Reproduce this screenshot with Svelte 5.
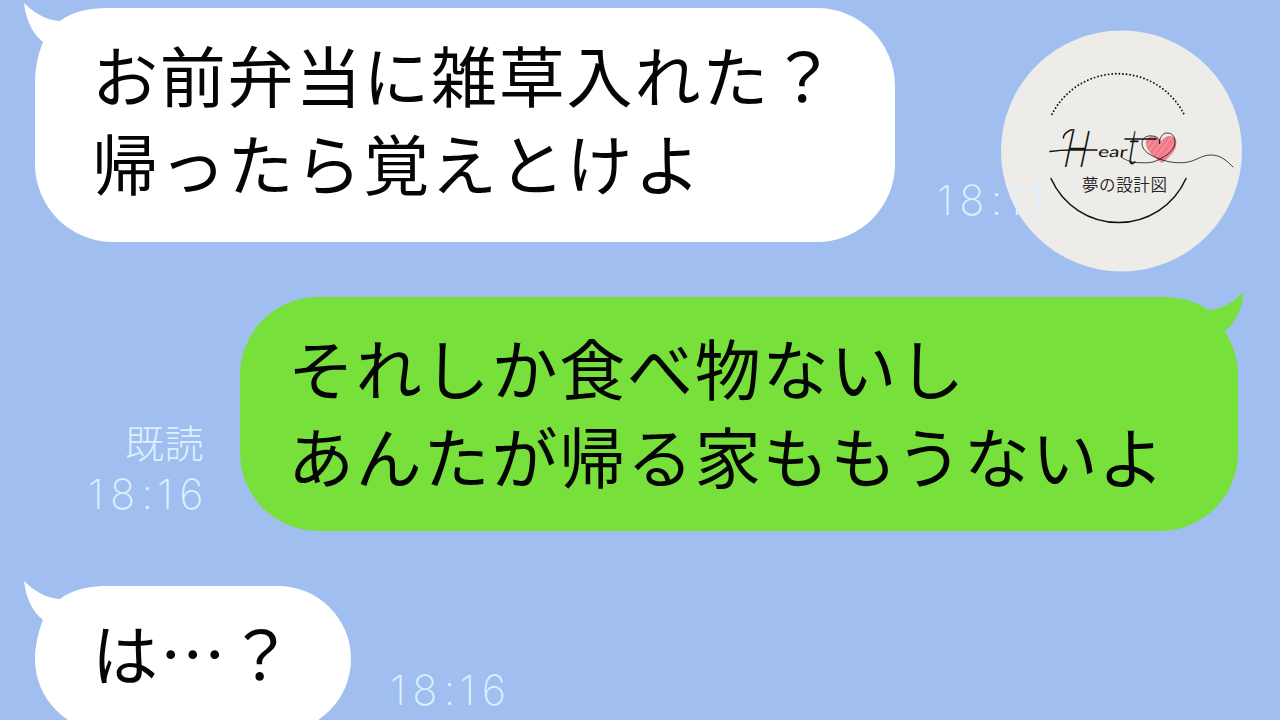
<script>
	const messages = [
		{
			id: 1,
			mine: false,
			lines: ['お前弁当に雑草入れた？', '帰ったら覚えとけよ'],
			hour: '18',
			minute: '11'
		},
		{
			id: 2,
			mine: true,
			read: true,
			lines: ['それしか食べ物ないし', 'あんたが帰る家ももうないよ'],
			hour: '18',
			minute: '16'
		},
		{
			id: 3,
			mine: false,
			lines: ['は…？'],
			hour: '18',
			minute: '16'
		}
	];
</script>

<main class="chat">
	<div class="badge">
		<svg viewBox="0 0 242 242">
			<defs>
				<clipPath id="heart">
					<path d="M162 133C152 126 145 119 146 112C147 105 156 105 161 111C166 104 174 105 176 110C178 119 171 127 162 133Z" />
				</clipPath>
			</defs>
			<circle class="disc" cx="121.500" cy="121" r="120.500" />
			<path class="dots" d="M52 84.300A74 74 0 0 1 184 84.300" />
			<path class="arc" d="M51 148.500A73.800 73.800 0 0 0 186 148.500" />
			<g clip-path="url(#heart)">
				<rect class="fill" x="140" y="100" width="40" height="35" />
				<path class="hatch" d="M146 118L156 103M148 123L162 103M152 126L168 104M155 129L174 104M159 132L178 108M164 132L179 114" />
			</g>
			<text class="script" font-size="51" transform="translate(61.500 136.500) skewX(-12) scale(0.620 1)">H</text>
			<text class="script ear" font-size="15" transform="translate(97.500 127) skewX(-8) scale(1.400 1)">ear</text>
			<text class="script" font-size="49" transform="translate(125.500 134) skewX(-9) scale(0.600 1)">t</text>
			<path class="bar" d="M50 121.500Q60 120 72 120H97M125 109H156" />
			<path class="hook" d="M63.500 108C63 104 70 99 74 100" />
			<path class="thread" d="M121 127C127 131 133 132.700 140 132.700C147 133 152 133 157 130.500C168 125 175 120 175 112C175 106 172 103 167 103C162 103 159 109 159.500 114C161 110 157 106 152 106C146 105 142 109 142 113C142 120 148 124 155 127C166 132 174 133 183 132.700C196 132 200 125 211 125C221 125 227 131 233 137" />
			<text class="name" x="82" y="160.500">夢の設計図</text>
		</svg>
	</div>

	{#each messages as message (message.id)}
		<div class="row" class:mine={message.mine}>
			<div class="bubble">
				<svg class="tail" viewBox="0 0 86 84">
					<path d="M0 1C8 9 22 19 36 19C48 10 62 6 86 6V84H11C11 66 14 52 19 40C10 33 2 20 0 1Z" />
				</svg>
				{#each message.lines as line}
					<p>{line}</p>
				{/each}
			</div>
			<div class="meta">
				{#if message.read}
					<span class="read">既読</span>
				{/if}
				<span class="time">{message.hour}<span class="colon">:</span>{message.minute}</span>
			</div>
		</div>
	{/each}
</main>

<style>
	:global(body) {
		margin: 0;
		background: #a0bff0;
	}

	.chat {
		position: relative;
		display: flex;
		flex-direction: column;
		gap: 55px;
		box-sizing: border-box;
		width: 1280px;
		height: 720px;
		padding: 8px 42px 0 35px;
		overflow: hidden;
		background: #a0bff0;
		font-family: 'Noto Sans CJK JP', sans-serif;
	}

	.row {
		position: relative;
		display: flex;
		flex: none;
		align-items: flex-end;
		gap: 42px;
	}

	.mine {
		flex-direction: row-reverse;
		gap: 36px;
	}

	.bubble {
		position: relative;
		box-sizing: border-box;
		width: 860px;
		padding: 21px 0 37px 57px;
		border-radius: 78px;
		background: #fff;
	}

	.mine .bubble {
		width: 998px;
		padding: 25px 0 33px 48px;
		background: #77e03a;
	}

	.row:last-child {
		gap: 39px;
	}

	.row:last-child .bubble {
		width: 316px;
		border-radius: 74px;
	}

	.bubble p {
		position: relative;
		margin: 0;
		color: #050505;
		font-size: 66px;
		font-weight: 400;
		line-height: 88px;
		letter-spacing: 1.8px;
		white-space: nowrap;
	}

	.tail {
		position: absolute;
		top: -6px;
		left: -11px;
		width: 86px;
		height: 84px;
		fill: #fff;
	}

	.mine .tail {
		right: -6px;
		left: auto;
		transform: scaleX(-1);
		fill: #77e03a;
	}

	.meta {
		display: flex;
		flex-direction: column;
		align-items: flex-end;
		padding-bottom: 16px;
		color: #dcf0ff;
	}

	.mine .meta {
		padding-bottom: 11px;
	}

	.read {
		font-size: 39px;
		font-weight: 300;
		line-height: 53px;
		letter-spacing: 0.5px;
	}

	.time {
		margin-right: -6px;
		font-family: Inter, sans-serif;
		font-size: 41.500px;
		font-weight: 250;
		font-feature-settings: 'calt' 0, 'kern' 0;
		line-height: 52px;
		letter-spacing: 6.500px;
	}

	.colon {
		letter-spacing: 4px;
	}

	.badge {
		position: absolute;
		top: 30px;
		left: 1000px;
		width: 242px;
		height: 242px;
	}

	.badge svg {
		display: block;
	}

	.disc {
		fill: #edece8;
	}

	.dots,
	.arc,
	.bar,
	.hook,
	.thread,
	.hatch {
		fill: none;
		stroke: #111;
		stroke-linecap: round;
	}

	.dots {
		stroke-width: 1.900;
		stroke-dasharray: 0 3.600;
	}

	.arc,
	.bar,
	.hook {
		stroke-width: 1.500;
	}

	.thread {
		stroke-width: 0.800;
	}

	.fill {
		fill: #f17a8a;
	}

	.hatch {
		stroke: #f8b4bc;
		stroke-width: 0.700;
	}

	.script {
		fill: #111;
		font-family: Lato, sans-serif;
		font-weight: 300;
	}

	.ear {
		font-weight: 400;
	}

	.name {
		fill: #222;
		font-size: 16.500px;
		font-weight: 350;
		letter-spacing: 0.600px;
	}
</style>
